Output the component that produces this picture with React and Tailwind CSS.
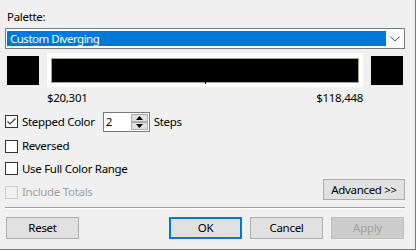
import React from "react";

function Check({ checked, disabled }) {
  return (
    <div
      className={
        "w-[13px] h-[13px] border flex items-center justify-center shrink-0 " +
        (disabled ? "border-[#cccccc] bg-[#f0f0f0]" : "border-[#333333] bg-white")
      }
    >
      {checked && (
        <svg width="11" height="11" viewBox="0 0 11 11">
          <path d="M1.5 5.5 L4 8 L9.5 2.5" fill="none" stroke="#333333" strokeWidth="1.1" />
        </svg>
      )}
    </div>
  );
}

function Btn({ children, className = "" }) {
  return (
    <div
      className={
        "w-[73px] h-[22px] flex items-center justify-center leading-none " + className
      }
    >
      {children}
    </div>
  );
}

export default function App() {
  return (
    <div className="w-[418px] h-[251px] bg-white">
      <div className="w-[416px] h-[250px] bg-[#f0f0f0] border-r border-b border-[#7a7a7a] font-['Noto_Sans',sans-serif] text-[11.5px] tracking-[-0.3px] text-black pl-[5px] flex flex-col">
        <div className="w-[400px] flex flex-col">
          <div className="h-[28px] pl-[2px] pt-[9px] leading-[16px]">Palette:</div>

          <div className="h-[21px] border border-[#7a7a7a] bg-white flex items-stretch">
            <div className="flex-1 my-[2px] ml-[1px] bg-[#0078d7] text-white leading-[15px] pl-[3px] tracking-[-0.5px]">
              Custom Diverging
            </div>
            <div className="w-[18px] flex items-center justify-center">
              <svg width="10" height="6" viewBox="0 0 10 6">
                <path d="M0.5 0.5 L5 5 L9.5 0.5" fill="none" stroke="#555555" strokeWidth="1" />
              </svg>
            </div>
          </div>

          <div className="mt-[4px] h-[34px] flex items-start">
            <div className="ml-[2px] mt-[3px] w-[32px] h-[29px] bg-black" />
            <div className="ml-[8px] w-[316px] h-[34px] bg-white pt-[5px] px-[4px]">
              <div className="relative h-[25px] bg-black border border-[#a3a294]">
                <div className="absolute left-[153px] top-[22px] w-[1px] h-[3px] bg-black" />
              </div>
            </div>
            <div className="ml-[8px] mt-[3px] w-[32px] h-[29px] bg-black" />
          </div>

          <div className="h-[22px] ml-[42px] w-[316px] flex justify-between leading-[16px] pt-[3px]">
            <span>$20,301</span>
            <span>$118,448</span>
          </div>

          <div className="h-[25px] flex items-center">
            <Check checked />
            <span className="ml-[4px] leading-[16px]">Stepped Color</span>
            <div className="ml-[8px] w-[47px] h-[20px] border border-[#7a7a7a] bg-white flex items-stretch">
              <div className="flex-1 pl-[2px] leading-[17px]">2</div>
              <div className="w-[17px] my-[1px] mr-[1px] flex flex-col">
                <div className="flex-1 border border-[#adadad] bg-[#e1e1e1] flex items-center justify-center">
                  <svg width="7" height="4" viewBox="0 0 7 4">
                    <path d="M0 4 L3.5 0 L7 4 Z" fill="#000" />
                  </svg>
                </div>
                <div className="flex-1 border border-[#adadad] bg-[#e1e1e1] flex items-center justify-center">
                  <svg width="7" height="4" viewBox="0 0 7 4">
                    <path d="M0 0 L3.5 4 L7 0 Z" fill="#000" />
                  </svg>
                </div>
              </div>
            </div>
            <span className="ml-[4px] leading-[16px]">Steps</span>
          </div>

          <div className="h-[24px] flex items-center">
            <Check />
            <span className="ml-[4px] leading-[16px]">Reversed</span>
          </div>

          <div className="h-[21px] flex items-center">
            <Check />
            <span className="ml-[4px] leading-[16px]">Use Full Color Range</span>
          </div>

          <div className="h-[21px] flex items-end justify-between">
            <div className="flex items-center">
              <Check disabled />
              <span className="ml-[4px] leading-[16px] text-[#a0a0a0]">Include Totals</span>
            </div>
            <div className="w-[82px] h-[21px] border border-[#adadad] bg-[#e1e1e1] flex items-center justify-center leading-none">
              Advanced &gt;&gt;
            </div>
          </div>

          <div className="mt-[7px] h-[1px] bg-[#a0a0a0]" />
          <div className="h-[1px] bg-white" />

          <div className="mt-[8px] flex items-center justify-between">
            <Btn className="ml-[1px] border border-[#adadad] bg-[#e1e1e1]">Reset</Btn>
            <div className="flex gap-[8px] mr-[1px]">
              <Btn className="border-2 border-[#0078d7] bg-[#e1e1e1]">OK</Btn>
              <Btn className="border border-[#adadad] bg-[#e1e1e1]">Cancel</Btn>
              <Btn className="border border-[#bfbfbf] bg-[#cccccc] text-[#a0a0a0]">Apply</Btn>
            </div>
          </div>
        </div>
      </div>
    </div>
  );
}
